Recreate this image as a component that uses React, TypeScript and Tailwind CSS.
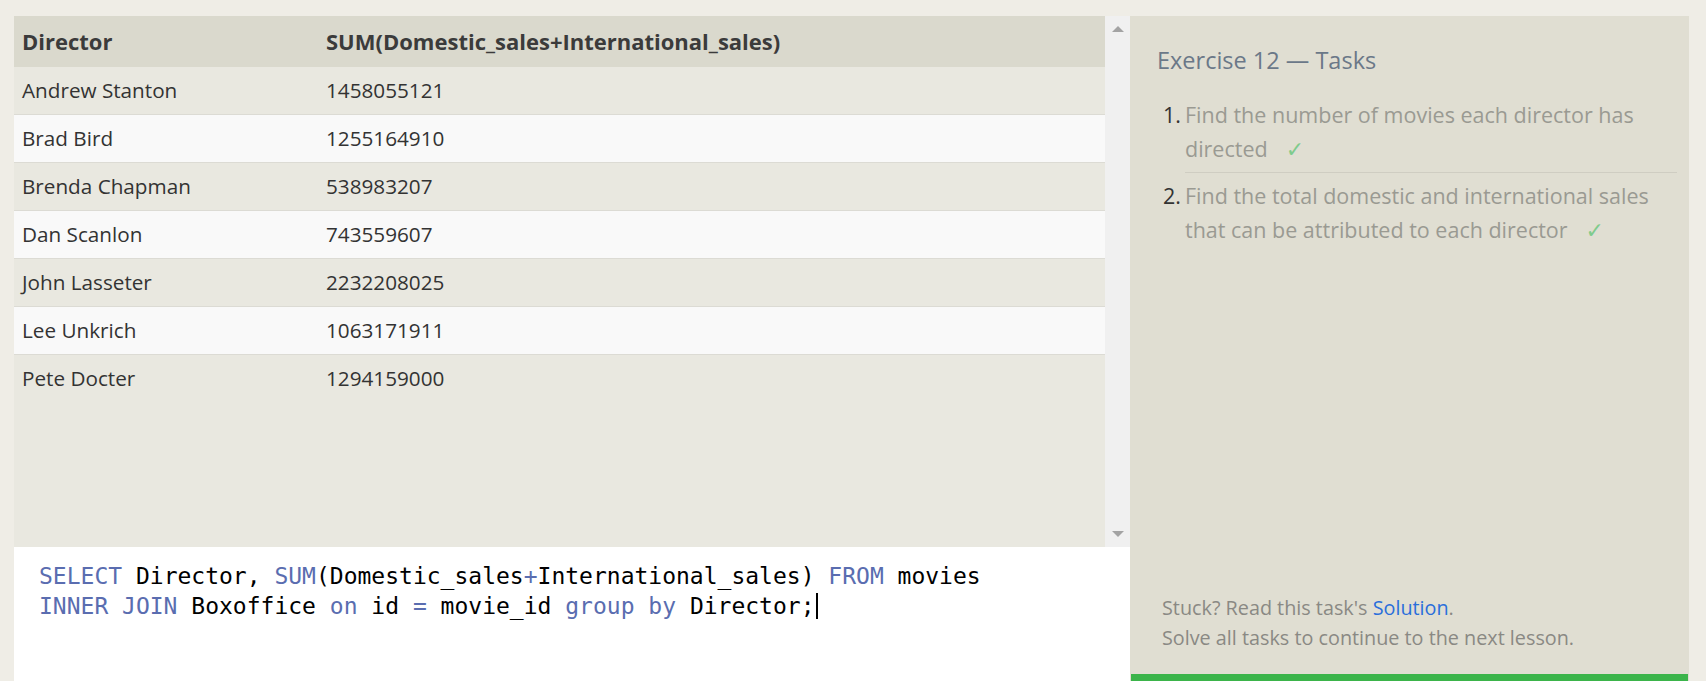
const rows = [
  { director: "Andrew Stanton", total: "1458055121" },
  { director: "Brad Bird", total: "1255164910" },
  { director: "Brenda Chapman", total: "538983207" },
  { director: "Dan Scanlon", total: "743559607" },
  { director: "John Lasseter", total: "2232208025" },
  { director: "Lee Unkrich", total: "1063171911" },
  { director: "Pete Docter", total: "1294159000" }
]

const tasks = [
  "Find the number of movies each director has directed",
  "Find the total domestic and international sales that can be attributed to each director"
]

const Kw = ({ children }: { children: React.ReactNode }) => <span className="text-[#5a6db0]">{children}</span>

const App = () => {
  return (
    <div className="h-[681px] overflow-hidden bg-[#efede6] pl-[14px] pr-[17px] pt-[16px] font-['Open_Sans',sans-serif]">
      <div className="flex h-full">
        <div className="flex w-[1116px] flex-col">
          <div className="flex h-[531px]">
            <div className="flex-1 bg-[#e9e8e0]">
              <div className="grid h-[51px] grid-cols-[312px_1fr] items-center bg-[#dad9cd] text-[22px] font-bold text-[#3b3b3b]">
                <span className="pl-[8px]">Director</span>
                <span>SUM(Domestic_sales+International_sales)</span>
              </div>
              {rows.map((row, i) => (
                <div
                  key={row.director}
                  className={
                    (i % 2 === 0 ? "bg-[#e9e8e0] " : "bg-[#f9f9f9] ") +
                    (i === rows.length - 1 ? "" : "border-b border-[#dcdbd4] ") +
                    "grid h-[48px] grid-cols-[312px_1fr] items-center text-[20.7px] text-[#333]"
                  }
                >
                  <span className="pl-[8px]">{row.director}</span>
                  <span>{row.total}</span>
                </div>
              ))}
            </div>
            <div className="flex w-[25px] flex-col items-center justify-between bg-[#f0f0f0] pb-[10px] pt-[10px]">
              <div className="h-0 w-0 border-x-[6px] border-b-[6px] border-x-transparent border-b-[#a3a3a3]" />
              <div className="h-0 w-0 border-x-[6px] border-t-[6px] border-x-transparent border-t-[#a3a3a3]" />
            </div>
          </div>
          <div className="flex-1 bg-white pl-[25px] pt-[14px] font-['DejaVu_Sans_Mono',monospace] text-[23px] leading-[30px] text-black">
            <div className="whitespace-pre">
              <Kw>SELECT</Kw> Director, <Kw>SUM</Kw>(Domestic_sales<Kw>+</Kw>International_sales) <Kw>FROM</Kw> movies
            </div>
            <div className="flex items-center whitespace-pre">
              <span>
                <Kw>INNER JOIN</Kw> Boxoffice <Kw>on</Kw> id <Kw>=</Kw> movie_id <Kw>group by</Kw> Director;
              </span>
              <span className="ml-[1px] inline-block h-[26px] w-[2px] bg-black" />
            </div>
          </div>
        </div>

        <div className="flex h-[720px] w-[559px] flex-col bg-[#e0ded2]">
          <h2 className="pl-[27px] pt-[28px] text-[23.5px] font-normal leading-[32px] text-[#6b7888]">
            Exercise 12 — Tasks
          </h2>
          <ol className="mt-[22px] pr-[12px]">
            {tasks.map((task, i) => (
              <li key={task} className="flex text-[21.5px] leading-[34px]">
                <span className={i === 0 ? "w-[55px] shrink-0 pr-[4px] text-right text-[#333]" : "w-[55px] shrink-0 pr-[4px] pt-[6px] text-right text-[#333]"}>
                  {i + 1}.
                </span>
                <span
                  className={
                    i === 0
                      ? "block flex-1 border-b border-[#cfcdc2] pb-[6px] text-[#9a9a92]"
                      : "block flex-1 pt-[6px] text-[#9a9a92]"
                  }
                >
                  {task}
                  <span className="ml-[18px] inline-block font-['DejaVu_Sans',sans-serif] text-[22px] leading-none text-[#7fcb8c]">✓</span>
                </span>
              </li>
            ))}
          </ol>
          <div className="flex-1" />
          <div className="pb-[21px] pl-[32px] text-[19.8px] leading-[30px] text-[#8a8984]">
            <p>
              Stuck? Read this task's <span className="text-[#2a6edb]">Solution</span>.
            </p>
            <p>Solve all tasks to continue to the next lesson.</p>
          </div>
          <div className="mx-[1px] h-[62px] bg-[#3bb44a]" />
        </div>
      </div>
    </div>
  )
}

export default App
